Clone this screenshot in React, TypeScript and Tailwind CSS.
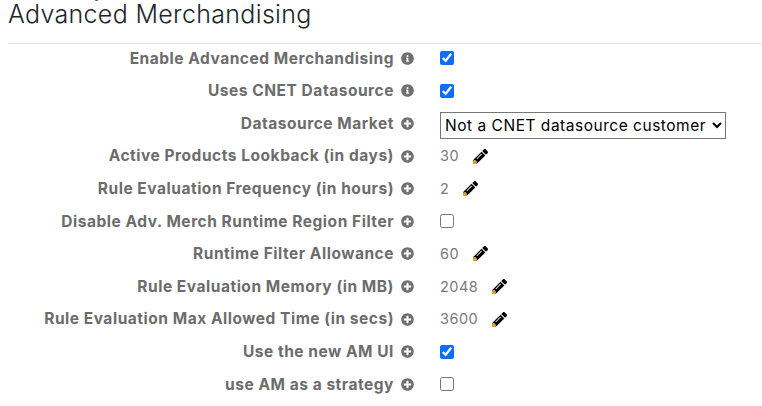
import React from "react";
import { FaInfoCircle, FaPlusCircle, FaPencilAlt } from "react-icons/fa";

type Row = {
  label: string;
  icon: "info" | "plus";
  kind: "check" | "uncheck" | "select" | "value";
  value?: string;
};

const rows: Row[] = [
  { label: "Enable Advanced Merchandising", icon: "info", kind: "check" },
  { label: "Uses CNET Datasource", icon: "info", kind: "check" },
  { label: "Datasource Market", icon: "plus", kind: "select" },
  { label: "Active Products Lookback (in days)", icon: "plus", kind: "value", value: "30" },
  { label: "Rule Evaluation Frequency (in hours)", icon: "plus", kind: "value", value: "2" },
  { label: "Disable Adv. Merch Runtime Region Filter", icon: "plus", kind: "uncheck" },
  { label: "Runtime Filter Allowance", icon: "plus", kind: "value", value: "60" },
  { label: "Rule Evaluation Memory (in MB)", icon: "plus", kind: "value", value: "2048" },
  { label: "Rule Evaluation Max Allowed Time (in secs)", icon: "plus", kind: "value", value: "3600" },
  { label: "Use the new AM UI", icon: "plus", kind: "check" },
  { label: "use AM as a strategy", icon: "plus", kind: "uncheck" },
];

function Pencil() {
  return (
    <span className="relative ml-[13.5px] inline-flex h-[15px] w-[15px] items-center justify-center">
      <FaPencilAlt className="h-[15px] w-[15px] text-black" />
      <span className="absolute bottom-0 left-0 h-[3px] w-[3px] bg-[#f59e0b]" />
    </span>
  );
}

export default function App() {
  return (
    <div className="relative h-[406px] w-[762px] overflow-hidden bg-white pl-2 font-['Inter','Liberation_Sans',sans-serif]">
      <span className="absolute top-0 left-[95px] h-[1px] w-[3px] rounded-b bg-[#555555]" />
      <h1 className="h-[28px] pt-[1px] text-[25px] leading-[26px] font-light tracking-[0.32px] text-[#212529]">
        Advanced Merchandising
      </h1>
      <hr className="mt-[15px] border-0 border-t border-[#e4e4e4]" />
      <div className="mt-[-2px] flex flex-col">
        {rows.map((r) => (
          <div key={r.label} className="flex h-[32.6px] items-center">
            <div className="flex w-[432px] shrink-0 items-center justify-end pr-[26px]">
              <span className="text-[15.5px] font-bold tracking-[0.53px] whitespace-nowrap text-[#6c6c6c]">{r.label}</span>
              {r.icon === "info" ? (
                <FaInfoCircle className="ml-[7px] h-[13px] w-[13px] shrink-0 text-[#6f6f6f]" />
              ) : (
                <FaPlusCircle className="ml-[7px] h-[13px] w-[13px] shrink-0 text-[#6f6f6f]" />
              )}
            </div>
            {r.kind === "check" && (
              <input type="checkbox" defaultChecked className="m-0 h-[14px] w-[14px] accent-[#0d6efd]" />
            )}
            {r.kind === "uncheck" && <input type="checkbox" className="m-0 h-[14px] w-[14px]" />}
            {r.kind === "select" && (
              <select className="mt-[4px] h-[27px] w-[286px] appearance-auto rounded-none border border-[#767676] bg-white pl-[0px] text-[15.5px] tracking-[0.52px] text-black">
                <option>Not a CNET datasource customer</option>
              </select>
            )}
            {r.kind === "value" && (
              <span className="flex items-center text-[14.5px] tracking-[0.5px] text-[#7a7a7a]">
                {r.value}
                <Pencil />
              </span>
            )}
          </div>
        ))}
      </div>
    </div>
  );
}
